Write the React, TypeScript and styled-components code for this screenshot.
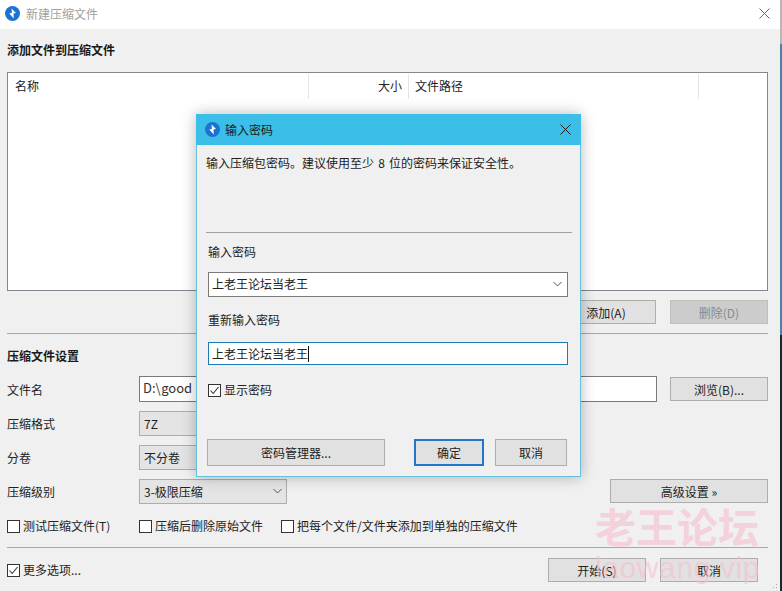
import React from "react";
import styled, { createGlobalStyle } from "styled-components";

const GlobalStyle = createGlobalStyle`
  html, body {
    margin: 0;
    padding: 0;
    background: #f0f0f0;
  }
  * {
    box-sizing: border-box;
  }
  body {
    font-family: "Noto Sans CJK SC", "Liberation Sans", sans-serif;
    font-size: 12px;
    color: #222;
  }
`;

const Window = styled.div`
  position: relative;
  width: 782px;
  height: 591px;
  overflow: hidden;
  background: #f0f0f0;
  border-right: 2px solid;
  border-image: linear-gradient(#b8b8b8 0 45px, #4f7fa8 45px 335px, #1c2730 335px) 1;
`;

const TitleBar = styled.div`
  height: 29px;
  background: #fff;
  display: flex;
  align-items: center;
  padding: 0 10px 2px 5px;
  gap: 6px;
  color: #a0a0a0;
`;

const TitleText = styled.span`
  flex: 1;
  font-size: 12px;
`;

const Body = styled.div`
  padding: 0 12px 0 7px;
  display: flex;
  flex-direction: column;
`;

const SectionTitle = styled.div<{ $top: number; $bottom: number }>`
  font-weight: 700;
  font-size: 12px;
  line-height: 18px;
  color: #1a1a1a;
  margin-top: ${(p) => p.$top}px;
  margin-bottom: ${(p) => p.$bottom}px;
`;

const ListBox = styled.div`
  height: 219px;
  background: #fff;
  border: 1px solid #828790;
`;

const ListHeader = styled.div`
  display: grid;
  grid-template-columns: 301px 100px 290px 1fr;
  height: 25px;
  margin-top: 1px;
`;

const HeaderCell = styled.div<{ $right?: boolean }>`
  padding: 0 ${(p) => (p.$right ? 6 : 7)}px 0 ${(p) => (p.$right ? 7 : 6)}px;
  line-height: 23px;
  border-right: 1px solid #e4e4e4;
  text-align: ${(p) => (p.$right ? "right" : "left")};
  &:first-child {
    padding-left: 7px;
  }
  &:last-child {
    border-right: none;
  }
`;

const ListActions = styled.div`
  display: flex;
  justify-content: flex-end;
  gap: 14px;
  margin-top: 9px;
`;

const Button = styled.div<{ $w: number; $h?: number; $disabled?: boolean; $primary?: boolean }>`
  width: ${(p) => p.$w}px;
  height: ${(p) => p.$h ?? 24}px;
  flex: none;
  display: flex;
  align-items: center;
  justify-content: center;
  background: ${(p) => (p.$disabled ? "#cccccc" : "#e1e1e1")};
  border: ${(p) => (p.$primary ? "2px solid #1f78c8" : `1px solid ${p.$disabled ? "#bfbfbf" : "#adadad"}`)};
  color: ${(p) => (p.$disabled ? "#8a8a8a" : "#222")};
`;

const Divider = styled.div<{ $top: number }>`
  height: 1px;
  background: #a8a8a8;
  margin-top: ${(p) => p.$top}px;
`;

const FormRow = styled.div<{ $top: number }>`
  display: flex;
  align-items: center;
  margin-top: ${(p) => p.$top}px;
  height: 26px;
`;

const RowLabel = styled.div`
  width: 132px;
  flex: none;
`;

const TextInput = styled.div<{ $w: number }>`
  width: ${(p) => p.$w}px;
  height: 26px;
  flex: none;
  background: #fff;
  border: 1px solid #7a7a7a;
  padding: 0 3px;
  line-height: 22px;
  font-size: 13px;
  color: #333;
`;

const Select = styled.div<{ $w: number }>`
  width: ${(p) => p.$w}px;
  height: 25px;
  flex: none;
  display: flex;
  align-items: center;
  justify-content: space-between;
  padding: 0 4px 0 4px;
  background: #e4e4e4;
  border: 1px solid #adadad;
`;

const Spacer = styled.div`
  flex: 1;
`;

const CheckRow = styled.div`
  display: flex;
  align-items: center;
  margin-top: 13px;
  height: 18px;
`;

const CheckLabel = styled.label<{ $w?: number }>`
  display: flex;
  align-items: center;
  gap: 3px;
  line-height: 18px;
  width: ${(p) => (p.$w ? `${p.$w}px` : "auto")};
  flex: none;
`;

const Box = styled.span`
  width: 13px;
  height: 13px;
  flex: none;
  display: flex;
  align-items: center;
  justify-content: center;
  background: #fff;
  border: 1px solid #333;
`;

const BottomRow = styled.div`
  display: flex;
  align-items: center;
  justify-content: space-between;
  margin-top: 10px;
  height: 24px;
  padding-right: 10px;
`;

const BottomButtons = styled.div`
  display: flex;
  gap: 14px;
`;

const Grip = styled.div`
  position: absolute;
  right: 1px;
  bottom: 1px;
  width: 10px;
  height: 10px;
  background-image: radial-gradient(#a8a8a8 1px, transparent 1px);
  background-size: 3px 3px;
  clip-path: polygon(100% 0, 100% 100%, 0 100%);
`;

const Watermark = styled.div`
  position: absolute;
  left: 595px;
  top: 501px;
  width: 172px;
  color: rgba(248, 190, 205, 0.62);
  pointer-events: none;
`;

const MarkTitle = styled.div`
  font-size: 41px;
  line-height: 48px;
  font-weight: 700;
  white-space: nowrap;
`;

const MarkUrl = styled.div`
  font-family: "Liberation Sans", sans-serif;
  font-size: 30px;
  line-height: 32px;
  margin-top: 3px;
  letter-spacing: 0.6px;
  white-space: nowrap;
`;

const Dialog = styled.div`
  position: absolute;
  left: 196px;
  top: 114px;
  width: 385px;
  height: 363px;
  background: #f0f0f0;
  border: 1px solid #62bfdd;
  box-shadow: 0 0 14px rgba(0, 0, 0, 0.28);
  display: flex;
  flex-direction: column;
`;

const DialogTitle = styled.div`
  height: 31px;
  flex: none;
  background: #3bbfe8;
  display: flex;
  align-items: center;
  padding: 0 10px 0 9px;
  gap: 5px;
  color: #1a1a1a;
  margin: -1px -1px 0;
  width: 385px;
`;

const DialogBody = styled.div`
  flex: 1;
  display: flex;
  flex-direction: column;
  padding: 0 8px 0 9px;
`;

const Hint = styled.div`
  margin-top: 9px;
  line-height: 18px;
  white-space: nowrap;
  word-spacing: 1.5px;
`;

const DialogRule = styled.div`
  height: 1px;
  background: #a0a0a0;
  margin-top: 60px;
`;

const FieldLabel = styled.div<{ $top: number }>`
  margin: ${(p) => p.$top}px 0 0 2px;
  line-height: 18px;
`;

const Combo = styled.div`
  margin: 11px 4px 0 2px;
  height: 25px;
  display: flex;
  align-items: center;
  justify-content: space-between;
  padding: 0 5px 2px 3px;
  background: #fff;
  border: 1px solid #7a7a7a;
`;

const FocusInput = styled.div`
  margin: 13px 4px 0 2px;
  height: 23px;
  display: flex;
  align-items: center;
  padding: 0 3px;
  background: #fff;
  border: 1px solid #1b7cb8;
`;

const Caret = styled.span`
  width: 1px;
  height: 16px;
  background: #111;
`;

const DialogCheck = styled(CheckLabel)`
  margin: 16px 0 0 2px;
`;

const DialogButtons = styled.div`
  display: flex;
  margin: 40px 0 0 1px;
`;

const ButtonGap = styled.div<{ $w: number }>`
  width: ${(p) => p.$w}px;
  flex: none;
`;

const Logo = () => (
  <svg width="15" height="15" viewBox="0 0 15 15">
    <circle cx="7.5" cy="7.5" r="7.5" fill="#1a73d2" />
    <path d="M6.6 2.4 11 7 8.5 7.5 8.8 12.4 4.2 7.6 6.8 7.1z" fill="#fff" />
  </svg>
);

const Chevron = ({ color = "#555" }: { color?: string }) => (
  <svg width="9" height="6" viewBox="0 0 9 6">
    <path d="M.5 1 4.5 5 8.5 1" fill="none" stroke={color} />
  </svg>
);

const Close = ({ color }: { color: string }) => (
  <svg width="11" height="11" viewBox="0 0 11 11">
    <path d="M.5.5l10 10M10.5.5l-10 10" stroke={color} fill="none" />
  </svg>
);

const Check = ({ checked }: { checked?: boolean }) => (
  <Box>
    {checked && (
      <svg width="11" height="11" viewBox="0 0 11 11">
        <path d="M1.5 5.5 4.2 8.5 9.5 2" fill="none" stroke="#333" strokeWidth="1.1" />
      </svg>
    )}
  </Box>
);

export default function App() {
  return (
    <>
      <GlobalStyle />
      <Window>
        <TitleBar>
          <Logo />
          <TitleText>新建压缩文件</TitleText>
          <Close color="#666" />
        </TitleBar>
        <Body>
          <SectionTitle $top={12} $bottom={13}>添加文件到压缩文件</SectionTitle>
          <ListBox>
            <ListHeader>
              <HeaderCell>名称</HeaderCell>
              <HeaderCell $right>大小</HeaderCell>
              <HeaderCell>文件路径</HeaderCell>
              <HeaderCell />
            </ListHeader>
          </ListBox>
          <ListActions>
            <Button $w={100}>添加(A)</Button>
            <Button $w={98} $disabled>删除(D)</Button>
          </ListActions>
          <Divider $top={9} />
          <SectionTitle $top={13} $bottom={0}>压缩文件设置</SectionTitle>
          <FormRow $top={11}>
            <RowLabel>文件名</RowLabel>
            <TextInput $w={518}>D:\good</TextInput>
            <Spacer />
            <Button $w={98}>浏览(B)...</Button>
          </FormRow>
          <FormRow $top={8}>
            <RowLabel>压缩格式</RowLabel>
            <Select $w={148}>7Z<Chevron /></Select>
          </FormRow>
          <FormRow $top={8}>
            <RowLabel>分卷</RowLabel>
            <Select $w={148}>不分卷<Chevron /></Select>
          </FormRow>
          <FormRow $top={8}>
            <RowLabel>压缩级别</RowLabel>
            <Select $w={148}>3-极限压缩<Chevron /></Select>
            <Spacer />
            <Button $w={158}>高级设置 »</Button>
          </FormRow>
          <CheckRow>
            <CheckLabel $w={132}><Check />测试压缩文件(T)</CheckLabel>
            <CheckLabel $w={142}><Check />压缩后删除原始文件</CheckLabel>
            <CheckLabel><Check />把每个文件/文件夹添加到单独的压缩文件</CheckLabel>
          </CheckRow>
          <Divider $top={12} />
          <BottomRow>
            <CheckLabel><Check checked />更多选项...</CheckLabel>
            <BottomButtons>
              <Button $w={98}>开始(S)</Button>
              <Button $w={98}>取消</Button>
            </BottomButtons>
          </BottomRow>
        </Body>
        <Grip />
        <Dialog>
          <DialogTitle>
            <Logo />
            <TitleText>输入密码</TitleText>
            <Close color="#1a1a1a" />
          </DialogTitle>
          <DialogBody>
            <Hint>输入压缩包密码。建议使用至少 8 位的密码来保证安全性。</Hint>
            <DialogRule />
            <FieldLabel $top={10}>输入密码</FieldLabel>
            <Combo>上老王论坛当老王<Chevron /></Combo>
            <FieldLabel $top={14}>重新输入密码</FieldLabel>
            <FocusInput>上老王论坛当老王<Caret /></FocusInput>
            <DialogCheck><Check checked />显示密码</DialogCheck>
            <DialogButtons>
              <Button $w={178} $h={27}>密码管理器...</Button>
              <ButtonGap $w={29} />
              <Button $w={70} $h={27} $primary>确定</Button>
              <ButtonGap $w={11} />
              <Button $w={72} $h={27}>取消</Button>
            </DialogButtons>
          </DialogBody>
        </Dialog>
        <Watermark>
          <MarkTitle>老王论坛</MarkTitle>
          <MarkUrl>laowang.vip</MarkUrl>
        </Watermark>
      </Window>
    </>
  );
}
